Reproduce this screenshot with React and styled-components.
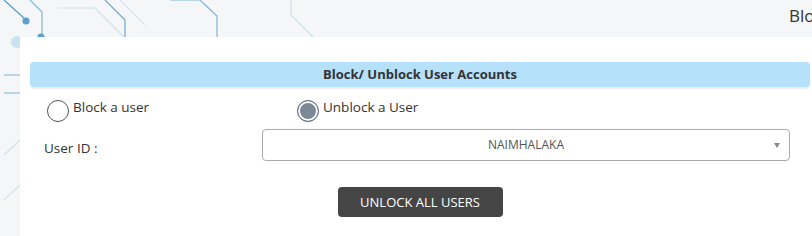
import React, { useState } from 'react';
import styled, { createGlobalStyle } from 'styled-components';

const GlobalStyle = createGlobalStyle`
  html, body {
    margin: 0;
    padding: 0;
    background: #f5f6f8;
    font-family: "Open Sans", "Liberation Sans", sans-serif;
    color: #333;
    overflow: hidden;
  }
`;

const Page = styled.div`
  position: relative;
  width: 812px;
  height: 236px;
  background: #f5f6f8;
  overflow: hidden;
`;

const Circuit = styled.svg`
  position: absolute;
  left: 0;
  top: 0;
  width: 812px;
  height: 236px;
  z-index: 0;
`;

const TopBar = styled.div`
  position: relative;
  z-index: 1;
  height: 37px;
  padding-left: 789px;
  box-sizing: border-box;
  white-space: nowrap;
  overflow: hidden;
  font-size: 17px;
  line-height: 31px;
  color: #333;
`;

const Panel = styled.section`
  position: relative;
  z-index: 1;
  margin-left: 20px;
  height: 199px;
  background: #fff;
  padding: 25px 2px 0 10px;
  box-sizing: border-box;
`;

const Header = styled.div`
  height: 25px;
  background: #b6e1fb;
  border-radius: 4px;
  box-shadow: 0 2px 2px rgba(0, 0, 0, 0.08);
  text-align: center;
  font-weight: 700;
  font-size: 13px;
  line-height: 25px;
  color: #333;
`;

const RadioRow = styled.div`
  display: grid;
  grid-template-columns: 250px 1fr;
  padding-left: 17px;
  margin-top: 11px;
`;

const RadioLabel = styled.label`
  display: flex;
  align-items: flex-start;
  gap: 4px;
  font-size: 13.5px;
  line-height: 18px;
  cursor: pointer;
`;

const RadioCircle = styled.span`
  width: 22px;
  height: 22px;
  margin-top: 2px;
  box-sizing: border-box;
  border-radius: 50%;
  border: 1px solid ${(p) => (p.$checked ? '#5f6b78' : '#555')};
  background: ${(p) => (p.$checked ? '#7b8896' : '#fff')};
  box-shadow: ${(p) => (p.$checked ? 'inset 0 0 0 2px #fff' : 'none')};
  flex: none;
`;

const FieldRow = styled.div`
  display: grid;
  grid-template-columns: 218px 528px;
  align-items: center;
  padding-left: 14px;
  margin-top: 7px;
`;

const FieldLabel = styled.span`
  font-size: 13.5px;
  padding-top: 5px;
`;

const Select = styled.div`
  position: relative;
  height: 32px;
  box-sizing: border-box;
  border: 1px solid #aaa;
  border-radius: 4px;
  text-align: center;
  font-size: 12px;
  line-height: 30px;
  color: #555;
`;

const Arrow = styled.span`
  position: absolute;
  right: 9px;
  top: 13px;
  width: 0;
  height: 0;
  border-left: 3.5px solid transparent;
  border-right: 3.5px solid transparent;
  border-top: 5px solid #888;
`;

const ButtonRow = styled.div`
  display: flex;
  justify-content: center;
  margin-top: 26px;
`;

const Button = styled.button`
  width: 165px;
  height: 30px;
  border: none;
  border-radius: 4px;
  background: #454545;
  color: #fff;
  font-family: inherit;
  font-size: 13px;
  cursor: pointer;
`;

const App = () => {
  const [mode, setMode] = useState('unblock');

  return (
    <>
      <GlobalStyle />
      <Page>
        <Circuit viewBox="0 0 812 236">
          <g fill="none" strokeWidth="1.2">
            <path d="M4 0 L25 19" stroke="#4f9dc9" />
            <path d="M30 0 L42 12 L42 37" stroke="#7fb6d6" />
            <path d="M58 8 L95 8 L125 38" stroke="#cfe2ea" />
            <path d="M105 0 L125 20 L125 37" stroke="#6aa9cf" />
            <path d="M120 0 L145 25" stroke="#d6e6ee" />
            <path d="M170 0 L200 0 L217 16 L217 37" stroke="#7fb6d6" />
            <path d="M291 0 L291 15 L313 37" stroke="#cfe2ea" />
            <path d="M4 75 L20 75" stroke="#8fc0dd" />
            <path d="M4 93 L20 93" stroke="#8fc0dd" />
            <path d="M4 155 L20 140" stroke="#cfe4ec" />
            <path d="M4 200 L20 185" stroke="#cfe4ec" />
          </g>
          <circle cx="26" cy="21" r="3.6" fill="#5aa3cc" />
          <circle cx="41" cy="37" r="3.6" fill="#5aa3cc" />
          <circle cx="17" cy="42" r="6" fill="#c8e3f1" />
        </Circuit>
        <TopBar>Block/ Unblock User Accounts</TopBar>
        <Panel>
          <Header>Block/ Unblock User Accounts</Header>
          <RadioRow>
            <RadioLabel onClick={() => setMode('block')}>
              <RadioCircle $checked={mode === 'block'} />
              Block a user
            </RadioLabel>
            <RadioLabel onClick={() => setMode('unblock')}>
              <RadioCircle $checked={mode === 'unblock'} />
              Unblock a User
            </RadioLabel>
          </RadioRow>
          <FieldRow>
            <FieldLabel>User ID :</FieldLabel>
            <Select>
              NAIMHALAKA
              <Arrow />
            </Select>
          </FieldRow>
          <ButtonRow>
            <Button>UNLOCK ALL USERS</Button>
          </ButtonRow>
        </Panel>
      </Page>
    </>
  );
};

export default App;
